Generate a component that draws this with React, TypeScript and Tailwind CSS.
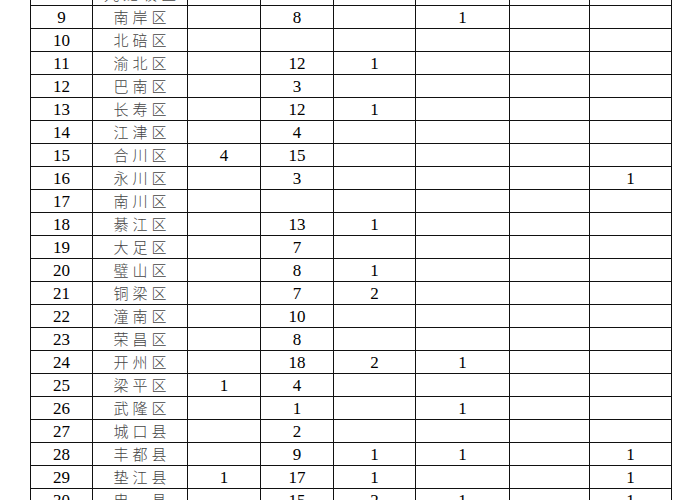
type Row = [string, string, string, string, string, string, string, string];

const rows: Row[] = [
  ["8", "九龙坡区", "", "19", "", "1", "1", ""],
  ["9", "南岸区", "", "8", "", "1", "", ""],
  ["10", "北碚区", "", "", "", "", "", ""],
  ["11", "渝北区", "", "12", "1", "", "", ""],
  ["12", "巴南区", "", "3", "", "", "", ""],
  ["13", "长寿区", "", "12", "1", "", "", ""],
  ["14", "江津区", "", "4", "", "", "", ""],
  ["15", "合川区", "4", "15", "", "", "", ""],
  ["16", "永川区", "", "3", "", "", "", "1"],
  ["17", "南川区", "", "", "", "", "", ""],
  ["18", "綦江区", "", "13", "1", "", "", ""],
  ["19", "大足区", "", "7", "", "", "", ""],
  ["20", "璧山区", "", "8", "1", "", "", ""],
  ["21", "铜梁区", "", "7", "2", "", "", ""],
  ["22", "潼南区", "", "10", "", "", "", ""],
  ["23", "荣昌区", "", "8", "", "", "", ""],
  ["24", "开州区", "", "18", "2", "1", "", ""],
  ["25", "梁平区", "1", "4", "", "", "", ""],
  ["26", "武隆区", "", "1", "", "1", "", ""],
  ["27", "城口县", "", "2", "", "", "", ""],
  ["28", "丰都县", "", "9", "1", "1", "", "1"],
  ["29", "垫江县", "1", "17", "1", "", "", "1"],
  ["30", "忠\u3000县", "", "15", "2", "1", "", "1"],
];

const widths = ["w-[62px]", "w-[95px]", "w-[73px]", "w-[73px]", "w-[82px]", "w-[94px]", "w-[80px]", "w-[82px]"];

export default function App() {
  return (
    <div className="w-[700px] h-[500px] overflow-hidden bg-white">
      <table className="ml-[30px] -mt-[18px] border-collapse table-fixed w-[641px] text-black">
        <colgroup>
          {widths.map((w, i) => (
            <col key={i} className={w} />
          ))}
        </colgroup>
        <tbody>
          {rows.map((r) => (
            <tr key={r[0]} className="h-[23px]">
              {r.map((c, i) => (
                <td
                  key={i}
                  className={
                    i === 1
                      ? "border border-[#111] p-0 h-[23px] text-center align-middle text-[15px] leading-[20px] tracking-[4px] pl-[4px] text-[#444] font-light font-['Noto_Sans_CJK_SC',sans-serif]"
                      : "border border-[#111] p-0 h-[23px] text-center align-middle text-[17px] leading-[20px] pt-[2px] font-['Liberation_Serif',serif]"
                  }
                >
                  {c}
                </td>
              ))}
            </tr>
          ))}
        </tbody>
      </table>
    </div>
  );
}
